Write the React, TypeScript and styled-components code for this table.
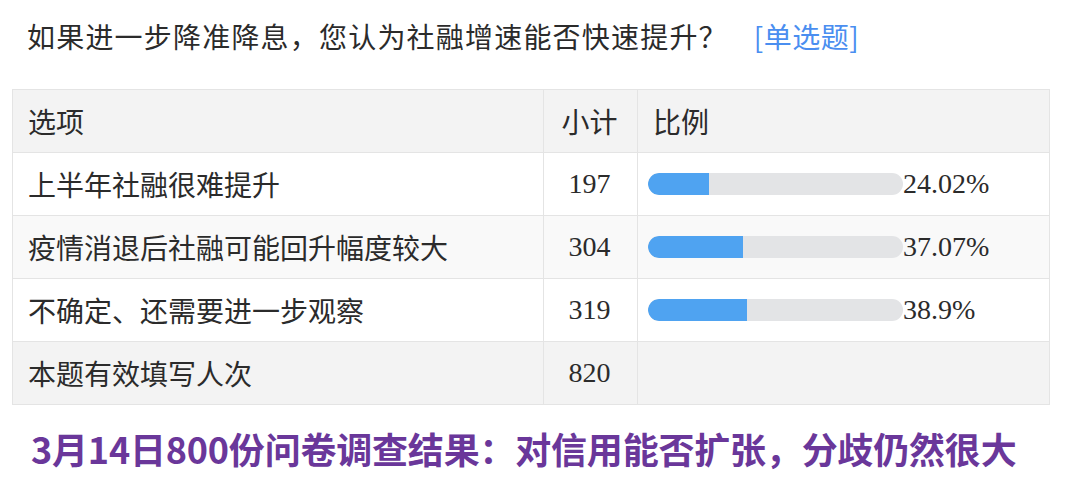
import React from 'react';
import styled, { createGlobalStyle } from 'styled-components';

const GlobalStyle = createGlobalStyle`
    html, body {
        margin: 0;
        padding: 0;
        background: #ffffff;
    }
    body {
        font-family: "Noto Sans CJK SC", "Noto Sans", sans-serif;
        color: #2b2b2b;
    }
`;

interface Option {
    label: string;
    count: number;
    percent: string;
}

const options: Option[] = [
    { label: '上半年社融很难提升', count: 197, percent: '24.02%' },
    { label: '疫情消退后社融可能回升幅度较大', count: 304, percent: '37.07%' },
    { label: '不确定、还需要进一步观察', count: 319, percent: '38.9%' },
];

const Page = styled.div`
    width: 1080px;
    height: 479px;
    padding: 0 12px;
    box-sizing: border-box;
    overflow: hidden;
`;

const Question = styled.div`
    display: flex;
    align-items: center;
    padding: 17px 0 0 15px;
    height: 38px;
    font-size: 28px;
    line-height: 38px;
    letter-spacing: 1.2px;
    color: #2b2b2b;
`;

const QuestionType = styled.span`
    margin-left: 26px;
    letter-spacing: 0.5px;
    color: #4a8ef0;
`;

const Table = styled.table`
    margin-top: 34px;
    width: 1037px;
    border-collapse: collapse;
    border: 1px solid #e4e4e4;
    table-layout: fixed;
`;

const Row = styled.tr<{ $shade?: string }>`
    height: 63px;
    background: ${({ $shade }) => $shade || '#ffffff'};
`;

const Cell = styled.td<{ $align?: string; $serif?: boolean }>`
    border: 1px solid #e4e4e4;
    padding: 0 0 0 15px;
    font-size: 28px;
    font-family: ${({ $serif }) =>
        $serif ? '"Liberation Serif", serif' : '"Noto Sans CJK SC", sans-serif'};
    text-align: ${({ $align }) => $align || 'left'};
    color: #2b2b2b;
    white-space: nowrap;
    vertical-align: middle;
`;

const CenterCell = styled(Cell)`
    padding: 0 2px 0 0;
`;

const BarCell = styled(Cell)`
    padding: 0 0 0 10px;
`;

const BarWrap = styled.div`
    display: flex;
    align-items: center;
`;

const Track = styled.div`
    width: 255px;
    height: 22px;
    border-radius: 11px;
    background: #e3e4e6;
    overflow: hidden;
`;

const Fill = styled.div`
    height: 100%;
    background: #4fa3f1;
    border-radius: 11px 0 0 11px;
`;

const Percent = styled.span`
    font-family: "Liberation Serif", serif;
    font-size: 28px;
    line-height: 1;
`;

const Caption = styled.div`
    margin: 21px 0 0 19px;
    font-size: 36px;
    line-height: 44px;
    font-weight: 700;
    color: #6a379a;
    letter-spacing: -0.2px;
    white-space: nowrap;
`;

const App: React.FC = () => {
    return (
        <Page>
            <GlobalStyle />
            <Question>
                如果进一步降准降息，您认为社融增速能否快速提升？
                <QuestionType>[单选题]</QuestionType>
            </Question>
            <Table>
                <colgroup>
                    <col style={{ width: 531 }} />
                    <col style={{ width: 94 }} />
                    <col style={{ width: 412 }} />
                </colgroup>
                <tbody>
                    <Row $shade="#f3f3f3">
                        <Cell>选项</Cell>
                        <CenterCell $align="center">小计</CenterCell>
                        <Cell>比例</Cell>
                    </Row>
                    {options.map((opt, i) => (
                        <Row key={opt.label} $shade={i === 1 ? '#f9f9f9' : '#ffffff'}>
                            <Cell>{opt.label}</Cell>
                            <CenterCell $align="center" $serif>{opt.count}</CenterCell>
                            <BarCell>
                                <BarWrap>
                                    <Track>
                                        <Fill style={{ width: opt.percent }} />
                                    </Track>
                                    <Percent>{opt.percent}</Percent>
                                </BarWrap>
                            </BarCell>
                        </Row>
                    ))}
                    <Row $shade="#f3f3f3">
                        <Cell>本题有效填写人次</Cell>
                        <CenterCell $align="center" $serif>820</CenterCell>
                        <Cell />
                    </Row>
                </tbody>
            </Table>
            <Caption>3月14日800份问卷调查结果：对信用能否扩张，分歧仍然很大</Caption>
        </Page>
    );
};

export default App;
